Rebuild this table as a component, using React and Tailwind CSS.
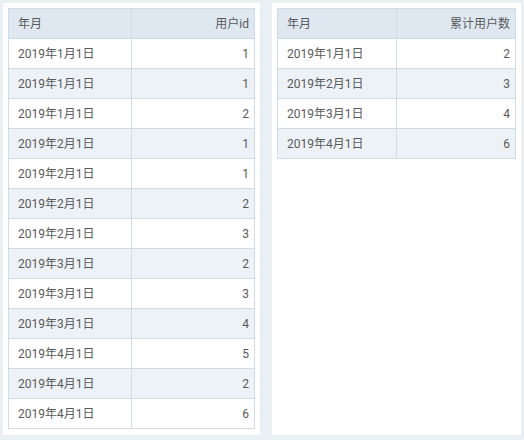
import React from 'react';

const left = [
    ['2019年1月1日', 1],
    ['2019年1月1日', 1],
    ['2019年1月1日', 2],
    ['2019年2月1日', 1],
    ['2019年2月1日', 1],
    ['2019年2月1日', 2],
    ['2019年2月1日', 3],
    ['2019年3月1日', 2],
    ['2019年3月1日', 3],
    ['2019年3月1日', 4],
    ['2019年4月1日', 5],
    ['2019年4月1日', 2],
    ['2019年4月1日', 6],
];

const right = [
    ['2019年1月1日', 2],
    ['2019年2月1日', 3],
    ['2019年3月1日', 4],
    ['2019年4月1日', 6],
];

function DataTable({ valueLabel, rows, splitCol }) {
    return (
        <table className="w-full border-collapse table-fixed">
            <colgroup>
                <col style={{ width: splitCol }} />
                <col />
            </colgroup>
            <thead>
                <tr className="h-[30px] bg-[#dfe8f1]">
                    <th className="border border-[#cfdce5] px-[9px] text-left font-normal">年月</th>
                    <th className="border border-[#cfdce5] px-[5px] text-right font-normal">{valueLabel}</th>
                </tr>
            </thead>
            <tbody>
                {rows.map(([date, v], i) => (
                    <tr key={i} className={i % 2 ? 'h-[30px] bg-[#edf2f7]' : 'h-[30px] bg-white'}>
                        <td className="border border-[#cfdce5] px-[9px]">{date}</td>
                        <td className="border border-[#cfdce5] px-[5px] text-right">{v}</td>
                    </tr>
                ))}
            </tbody>
        </table>
    );
}

export default function App() {
    return (
        <div
            className="w-[524px] h-[440px] bg-[#e9f0f4] p-[3px] flex gap-[12px] text-[12px] text-[#5a5a5a]"
            style={{ fontFamily: 'Roboto, "Noto Sans CJK SC", sans-serif' }}
        >
            <div className="w-[257px] h-[432px] bg-white p-[5px]">
                <DataTable valueLabel="用户id" rows={left} splitCol="123px" />
            </div>
            <div className="w-[249px] h-[432px] bg-white p-[5px]">
                <DataTable valueLabel="累计用户数" rows={right} splitCol="119px" />
            </div>
        </div>
    );
}
